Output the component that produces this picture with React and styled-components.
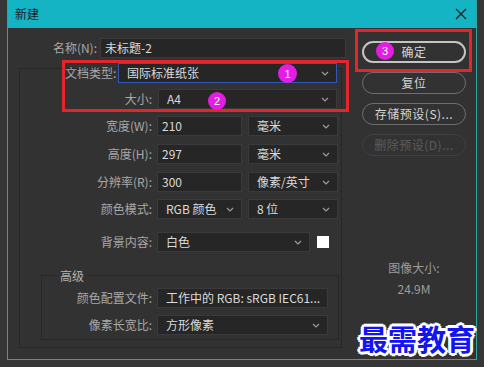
import React from "react";
import styled, { createGlobalStyle } from "styled-components";

const GlobalStyle = createGlobalStyle`
  body {
    margin: 0;
    background: #363636;
    font-family: "Noto Sans CJK SC", "Noto Sans", sans-serif;
  }
`;

const Page = styled.div`
  position: relative;
  width: 484px;
  height: 367px;
  padding-left: 7px;
  box-sizing: border-box;
  overflow: hidden;
`;

const Dialog = styled.div`
  width: 470px;
  height: 360px;
  box-sizing: border-box;
  border: 1px solid #2fa59c;
  border-top: none;
  background: #323232;
  display: flex;
  flex-direction: column;
`;

const TitleBar = styled.div`
  height: 28px;
  flex-shrink: 0;
  background: #14b4c5;
  display: flex;
  align-items: center;
  justify-content: space-between;
  padding: 0 9px 0 7px;
  font-size: 12px;
  line-height: 16px;
  color: #1c1c1c;
`;

const Body = styled.div`
  flex: 1;
  display: flex;
`;

const LeftCol = styled.div`
  width: 342px;
  padding-top: 10px;
  display: flex;
  flex-direction: column;
  align-items: flex-start;
`;

const RightCol = styled.div`
  flex: 1;
  padding: 10px 0 0 12px;
  display: flex;
  flex-direction: column;
  align-items: flex-start;
`;

const Row = styled.div`
  display: flex;
  align-items: center;
  height: 20px;
  margin-top: ${(p) => p.$mt || 0}px;
`;

const Label = styled.span`
  width: ${(p) => p.$w}px;
  margin-right: ${(p) => (p.$gap == null ? 5 : p.$gap)}px;
  flex-shrink: 0;
  text-align: right;
  white-space: nowrap;
  color: #a8a8a8;
  font-size: 12px;
  line-height: 16px;
`;

const Field = styled.div`
  width: ${(p) => p.$w}px;
  height: 20px;
  box-sizing: border-box;
  flex-shrink: 0;
  display: flex;
  align-items: center;
  justify-content: space-between;
  padding: 0 7px 0 ${(p) => (p.$select ? 8 : 4)}px;
  background: #262626;
  border: 1px solid ${(p) => (p.$focus ? "#3158b8" : "#3a3a3a")};
  color: #dadada;
  font-size: 12px;
  line-height: 16px;
  white-space: nowrap;
  overflow: hidden;
`;

const Swatch = styled.span`
  width: 12px;
  height: 12px;
  margin-left: 7px;
  background: #ffffff;
`;

const Group = styled.div`
  margin: 10px 0 0 11px;
  width: 323px;
  box-sizing: border-box;
  border: 1px solid #272727;
  padding-bottom: 7px;
`;

const AnnotBox = styled.div`
  position: relative;
  width: 287px;
  box-sizing: border-box;
  margin: -9px 0 0 42px;
  border: 3px solid #e3262c;
`;

const SubGroup = styled.div`
  margin: 23px 0 0 21px;
  width: 298px;
  box-sizing: border-box;
  border: 1px solid #272727;
  padding-bottom: 4px;
`;

const Legend = styled.div`
  width: fit-content;
  margin: -8px 0 0 15px;
  padding: 0 3px;
  background: #323232;
  color: #b4b4b4;
  font-size: 12px;
  line-height: 16px;
`;

const AnnotFrame = styled.div`
  position: relative;
  border: 3px solid #e3262c;
  padding: 6px 3px 6px 4px;
  margin: -9px -6px -9px -7px;
`;

const Button = styled.button`
  width: 104px;
  height: 22px;
  margin-top: ${(p) => p.$mt || 0}px;
  padding: 0;
  box-sizing: border-box;
  border-radius: 11px;
  background: transparent;
  border: ${(p) =>
    p.$primary ? "2px solid #c4c4c4" : p.disabled ? "1.5px solid #3f3f3f" : "1.5px solid #6e6e6e"};
  color: ${(p) => (p.disabled ? "#5c5c5c" : "#d6d6d6")};
  font-family: inherit;
  font-size: 12px;
  line-height: 16px;
  letter-spacing: 0.5px;
`;

const Info = styled.div`
  width: 104px;
  margin-top: 104px;
  text-align: center;
  color: #9c9c9c;
  font-size: 12px;
  line-height: 16px;
`;

const InfoValue = styled.div`
  margin-top: 5px;
`;

const Badge = styled.span`
  position: absolute;
  left: ${(p) => p.$x}px;
  top: ${(p) => p.$y}px;
  width: ${(p) => p.$d || 18}px;
  height: ${(p) => p.$d || 18}px;
  border-radius: 50%;
  background: #e31de3;
  color: #ffffff;
  font-family: "Liberation Sans", sans-serif;
  font-size: 11px;
  display: flex;
  align-items: center;
  justify-content: center;
`;

const Watermark = styled.div`
  position: absolute;
  left: 359px;
  top: 320px;
  font-size: 29px;
  line-height: 36px;
  font-weight: 700;
  color: #1414ee;
  letter-spacing: 0;
  text-shadow: 2px 0 0 #fff, -2px 0 0 #fff, 0 2px 0 #fff, 0 -2px 0 #fff,
    2px 2px 0 #fff, -2px -2px 0 #fff, 2px -2px 0 #fff, -2px 2px 0 #fff,
    3px 0 0 #fff, -3px 0 0 #fff, 0 3px 0 #fff, 0 -3px 0 #fff;
`;

const Chevron = () => (
  <svg width="8" height="5" viewBox="0 0 8 5">
    <path d="M1 1l3 3 3-3" stroke="#9c9c9c" strokeWidth="1.2" fill="none" />
  </svg>
);

const Select = ({ w, focus, children }) => (
  <Field $w={w} $select $focus={focus}>
    <span>{children}</span>
    <Chevron />
  </Field>
);

export default function App() {
  return (
    <Page>
      <GlobalStyle />
      <Dialog>
        <TitleBar>
          <span>新建</span>
          <svg width="12" height="12" viewBox="0 0 12 12">
            <path d="M1 1l10 10M11 1L1 11" stroke="#1e1e1e" strokeWidth="1.3" />
          </svg>
        </TitleBar>
        <Body>
          <LeftCol>
            <Row>
              <Label $w={89} $gap={3}>名称(N):</Label>
              <Field $w={246}>未标题-2</Field>
            </Row>
            <Group>
              <AnnotBox>
                <Row>
                  <Label $w={48}>文档类型:</Label>
                  <Select w={219} focus>国际标准纸张</Select>
                </Row>
                <Row $mt={6}>
                  <Label $w={87} $gap={6}>大小:</Label>
                  <Select w={179}>A4</Select>
                </Row>
                <Badge $x={213} $y={1} $d={19}>1</Badge>
                <Badge $x={143} $y={29}>2</Badge>
              </AnnotBox>
              <Row $mt={4}>
                <Label $w={132}>宽度(W):</Label>
                <Field $w={85}>210</Field>
                <Label $w={0} $gap={6} />
                <Select w={90}>毫米</Select>
              </Row>
              <Row $mt={8}>
                <Label $w={132}>高度(H):</Label>
                <Field $w={85}>297</Field>
                <Label $w={0} $gap={6} />
                <Select w={90}>毫米</Select>
              </Row>
              <Row $mt={8}>
                <Label $w={132}>分辨率(R):</Label>
                <Field $w={85}>300</Field>
                <Label $w={0} $gap={6} />
                <Select w={90}>像素/英寸</Select>
              </Row>
              <Row $mt={7}>
                <Label $w={132}>颜色模式:</Label>
                <Select w={85}>RGB 颜色</Select>
                <Label $w={0} $gap={6} />
                <Select w={90}>8 位</Select>
              </Row>
              <Row $mt={13}>
                <Label $w={132}>背景内容:</Label>
                <Select w={153}>白色</Select>
                <Swatch />
              </Row>
              <SubGroup>
                <Legend>高级</Legend>
                <Row $mt={4}>
                  <Label $w={110}>颜色配置文件:</Label>
                  <Select w={171}>工作中的 RGB: sRGB IEC61...</Select>
                </Row>
                <Row $mt={7}>
                  <Label $w={110}>像素长宽比:</Label>
                  <Select w={171}>方形像素</Select>
                </Row>
              </SubGroup>
            </Group>
          </LeftCol>
          <RightCol>
            <AnnotFrame>
              <Button $primary>确定</Button>
              <Badge $x={18} $y={10}>3</Badge>
            </AnnotFrame>
            <Button $mt={9}>复位</Button>
            <Button $mt={9}>存储预设(S)...</Button>
            <Button $mt={9} disabled>删除预设(D)...</Button>
            <Info>
              图像大小:
              <InfoValue>24.9M</InfoValue>
            </Info>
          </RightCol>
        </Body>
      </Dialog>
      <Watermark>最需教育</Watermark>
    </Page>
  );
}
